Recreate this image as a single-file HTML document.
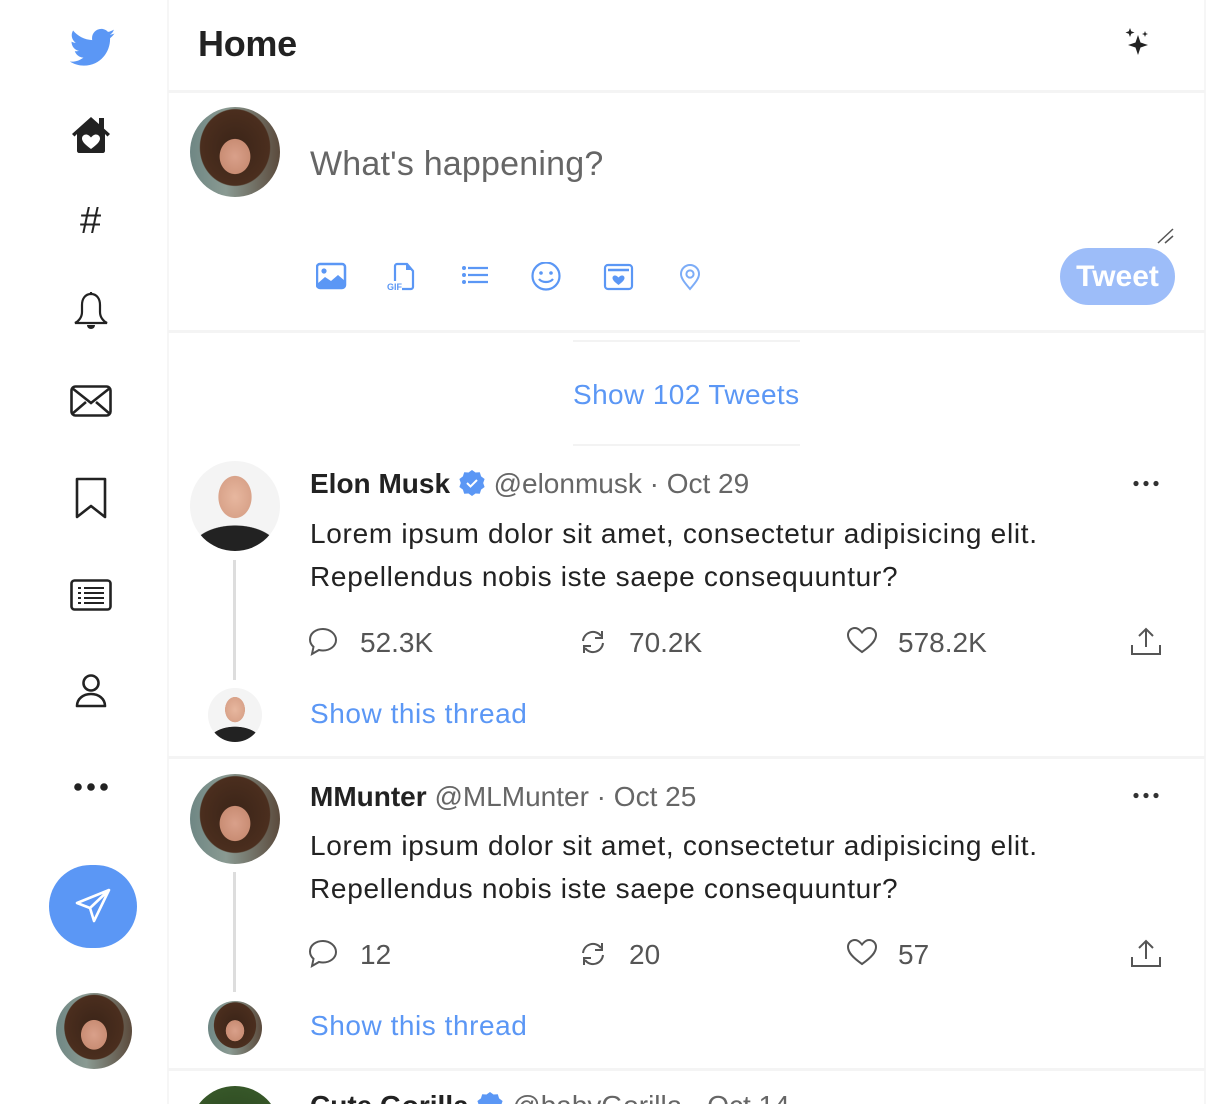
<!DOCTYPE html>
<html style="width:1220px;height:1104px;overflow:hidden"><head><meta charset="utf-8"><style>
*{margin:0;padding:0;box-sizing:border-box}
body{width:1220px;height:1104px;overflow:hidden;background:#fff;font-family:"Liberation Sans",Arial,sans-serif;color:#222;position:relative}
.a{position:absolute}
.sep{position:absolute;left:168px;width:1037px;height:3px;background:#f4f4f4}
.av{position:absolute;border-radius:50%;overflow:hidden}
.woman{background:radial-gradient(ellipse 28% 32% at 50% 55%,#d9a08a 0,#c98d74 60%,transparent 62%),radial-gradient(ellipse 55% 60% at 50% 45%,#3a2418 0,#4b2e1e 70%,transparent 72%),linear-gradient(90deg,#6f8784,#8a9a92 40%,#5b4a3c);}
.elon{background:radial-gradient(ellipse 26% 33% at 50% 40%,#e7b79f 0,#d9a38a 70%,transparent 72%),radial-gradient(ellipse 60% 35% at 50% 100%,#222 0,#222 80%,transparent 82%),#f4f4f4;}
.txt{font-size:28px;line-height:43px;color:#222;letter-spacing:0.7px;white-space:nowrap}
.nm{font-size:28px;font-weight:bold;color:#222}
.mut{color:#666}
.st{font-size:28px;color:#555}
.blue{color:#5b97f5}
</style></head><body>
<div class="a" style="left:167px;top:0;width:2px;height:1104px;background:#f6f6f6"></div>
<div class="a" style="left:1204px;top:0;width:2px;height:1104px;background:#f6f6f6"></div>
<svg class="a" style="left:70px;top:28px" width="46" height="40" viewBox="0 0 24 20"><path fill="#5b97f5" d="M23.6 2.3c-.9.4-1.8.6-2.8.8 1-.6 1.8-1.6 2.1-2.7-.9.6-2 1-3.1 1.2C19 .6 17.7 0 16.3 0c-2.7 0-4.8 2.2-4.8 4.8 0 .4 0 .8.1 1.1C7.5 5.7 4 3.8 1.6.9c-.4.7-.7 1.6-.7 2.4 0 1.7.9 3.2 2.1 4-.8 0-1.5-.2-2.2-.6v.1c0 2.3 1.7 4.3 3.9 4.7-.4.1-.8.2-1.3.2-.3 0-.6 0-.9-.1.6 1.9 2.4 3.3 4.5 3.4-1.7 1.3-3.7 2.1-6 2.1-.4 0-.8 0-1.2-.1 2.1 1.4 4.7 2.2 7.4 2.2 8.9 0 13.7-7.4 13.7-13.7v-.6c.9-.7 1.7-1.5 2.3-2.5z"/></svg>
<svg class="a" style="left:71px;top:115px" width="40" height="38" viewBox="0 0 40 38"><path fill="#222" d="M20 2L1 19l2.5 2.5L6 19v17c0 1 1 2 2 2h24c1 0 2-1 2-2V19l2.5 2.5L39 19l-6-5.4V3h-5v6.1z"/><path fill="#fff" d="M20 34c-6-4.5-9-7.5-9-10.5 0-2.5 2-4 4-4 2 0 3.5 1.3 5 3 1.5-1.7 3-3 5-3s4 1.5 4 4c0 3-3 6-9 10.5z"/></svg>
<div class="a" style="left:80px;top:200px;font-size:38px;color:#222">#</div>
<svg class="a" style="left:72px;top:290px" width="38" height="42" viewBox="0 0 38 42"><path fill="none" stroke="#222" stroke-width="2.2" d="M19 2v2M19 4c-6 0-9 5-9 11v7c0 5-3 9-7 11h32c-4-2-7-6-7-11v-7c0-6-3-11-9-11z"/><path fill="#222" d="M15 35h8c0 2.5-2 4-4 4s-4-1.5-4-4z"/></svg>
<svg class="a" style="left:70px;top:385px" width="42" height="32" viewBox="0 0 42 32"><rect x="1.5" y="1.5" width="39" height="29" rx="4" fill="none" stroke="#222" stroke-width="2.6"/><path d="M2 3l19 15L40 3M2 29l14-12M40 29L26 17" fill="none" stroke="#222" stroke-width="2.6"/></svg>
<svg class="a" style="left:74px;top:476px" width="34" height="44" viewBox="0 0 34 44"><path d="M3 3h28v38L17 30 3 41z" fill="none" stroke="#222" stroke-width="2.6" stroke-linejoin="round"/></svg>
<svg class="a" style="left:70px;top:579px" width="42" height="32" viewBox="0 0 42 32"><rect x="1.5" y="1.5" width="39" height="29" rx="3" fill="none" stroke="#222" stroke-width="2.6"/><path d="M8 9h3M14 9h20M8 14h3M14 14h20M8 19h3M14 19h20M8 24h3M14 24h20" stroke="#222" stroke-width="2"/></svg>
<svg class="a" style="left:74px;top:673px" width="34" height="36" viewBox="0 0 34 36"><circle cx="17" cy="10" r="7.5" fill="none" stroke="#222" stroke-width="2.6"/><path d="M3 33c0-7 6-12 14-12s14 5 14 12z" fill="none" stroke="#222" stroke-width="2.6" stroke-linejoin="round"/></svg>
<svg class="a" style="left:73px;top:781px" width="36" height="12"><circle cx="5" cy="6" r="3.8" fill="#222"/><circle cx="18" cy="6" r="3.8" fill="#222"/><circle cx="31" cy="6" r="3.8" fill="#222"/></svg>
<div class="a" style="left:49px;top:865px;width:88px;height:83px;border-radius:42px;background:#5b97f5"></div>
<svg class="a" style="left:75px;top:888px" width="36" height="36" viewBox="0 0 36 36"><path d="M34 2L2 15l13 5 4 13zM15 20L34 2" fill="none" stroke="#fff" stroke-width="2.6" stroke-linejoin="round"/></svg>
<div class="av woman" style="left:56px;top:993px;width:76px;height:76px"></div>

<div class="a" style="left:198px;top:23px;font-size:36px;font-weight:bold;color:#222;letter-spacing:-0.3px">Home</div>
<svg class="a" style="left:1124px;top:27px" width="28" height="32" viewBox="0 0 28 32"><path fill="#222" d="M14 8l2.5 7.5L24 18l-7.5 2.5L14 28l-2.5-7.5L4 18l7.5-2.5z"/><path fill="#222" d="M6 1l1.2 3.3L10.5 5.5 7.2 6.7 6 10 4.8 6.7 1.5 5.5 4.8 4.3zM21 4l.8 2.2 2.2.8-2.2.8L21 10l-.8-2.2L18 7l2.2-.8z"/></svg>
<div class="sep" style="top:90px"></div>

<div class="av woman" style="left:190px;top:107px;width:90px;height:90px"></div>
<div class="a" style="left:310px;top:145px;font-size:34px;color:#666;letter-spacing:0.2px">What's happening?</div>
<svg class="a" style="left:1157px;top:228px" width="18" height="16"><path d="M1 15L16 1M8 15l8-7" stroke="#555" stroke-width="1.5"/></svg>
<svg class="a" style="left:316px;top:262px" width="400" height="30" viewBox="0 0 400 30">
<g fill="#5b97f5" stroke="#5b97f5">
<rect x="1" y="2" width="28" height="24" rx="3" fill="none" stroke-width="2.5"/><circle cx="8" cy="9" r="2.6" stroke="none"/><path d="M1 22l8-7 6 4 7-6 7 6v7H1z" stroke="none"/>
<path d="M86 27h9c1 0 2-1 2-2V9l-6-7h-10c-1 0-2 1-2 2v15" fill="none" stroke-width="2.2"/><path d="M90 2v6h6" stroke="none"/>
<text x="71" y="28" font-size="9" font-family="Liberation Sans" font-weight="bold" stroke="none">GIF</text>
<path d="M152 6h20M152 13h20M152 20h20" fill="none" stroke-width="2.2"/><circle cx="148" cy="6" r="2" stroke="none"/><circle cx="148" cy="13" r="2" stroke="none"/><circle cx="148" cy="20" r="2" stroke="none"/>
<circle cx="230" cy="14" r="13.5" fill="none" stroke-width="2.2"/><circle cx="225" cy="11" r="1.8" stroke="none"/><circle cx="235" cy="11" r="1.8" stroke="none"/><path d="M223 17c3 4 11 4 14 0" fill="none" stroke-width="2.2"/>
<rect x="289" y="3" width="27" height="24" rx="3" fill="none" stroke-width="2.2"/><path d="M292 8h21" stroke-width="2.6"/><path d="M302.5 23c-4-3-6-5-6-7 0-1.5 1-2.5 2.5-2.5 1.4 0 2.5 1 3.5 2 1-1 2-2 3.5-2s2.5 1 2.5 2.5c0 2-2 4-6 7z" stroke="none"/>
<path d="M374 27c-6-7-9-11-9-15a9 9 0 0 1 18 0c0 4-3 8-9 15z" fill="none" stroke-width="2" opacity=".8"/><circle cx="374" cy="12" r="3.6" fill="none" stroke-width="2" opacity=".8"/>
</g></svg>
<div class="a" style="left:1060px;top:248px;width:115px;height:57px;border-radius:29px;background:#9dbdf9;color:#fff;font-size:30px;font-weight:bold;text-align:center;line-height:57px">Tweet</div>
<div class="sep" style="top:330px"></div>

<div class="a" style="left:573px;top:340px;width:227px;height:2px;background:#f3f3f3"></div>
<div class="a blue" style="left:573px;top:379px;font-size:28px;letter-spacing:0.4px;white-space:nowrap">Show 102 Tweets</div>
<div class="a" style="left:573px;top:444px;width:227px;height:2px;background:#f3f3f3"></div>

<div class="av elon" style="left:190px;top:461px;width:90px;height:90px"></div>
<div class="a" style="left:233px;top:560px;width:3px;height:120px;background:#ddd"></div>
<div class="a" style="left:310px;top:468px;font-size:28px;white-space:nowrap"><span class="nm">Elon Musk</span> <svg width="28" height="28" viewBox="0 0 28 28" style="vertical-align:-4px"><path fill="#5b97f5" d="M14 1l3.5 2.5 4.3-.2 1.3 4.1 3.5 2.6-1.4 4 1.4 4-3.5 2.6-1.3 4.1-4.3-.2L14 27l-3.5-2.5-4.3.2-1.3-4.1L1.4 18l1.4-4-1.4-4 3.5-2.6 1.3-4.1 4.3.2z"/><path d="M9 14l3.5 3.5L19 11" fill="none" stroke="#fff" stroke-width="2"/></svg> <span class="mut">@elonmusk · Oct 29</span></div>
<svg class="a" style="left:1133px;top:480px" width="26" height="7"><circle cx="3" cy="3.5" r="2.6" fill="#333"/><circle cx="13" cy="3.5" r="2.6" fill="#333"/><circle cx="23" cy="3.5" r="2.6" fill="#333"/></svg>
<div class="a txt" style="left:310px;top:512px">Lorem ipsum dolor sit amet, consectetur adipisicing elit.<br>Repellendus nobis iste saepe consequuntur?</div>
<svg class="a" style="left:308px;top:627px" width="32" height="30" viewBox="0 0 32 30"><path d="M15 2C8 2 2 6 2 12.5c0 3 1.4 5.5 3.5 7.3L4 27l7-4c1.2.3 2.6.5 4 .5 7 0 13-4.5 13-10.5S22 2 15 2z" fill="none" stroke="#555" stroke-width="2"/></svg>
<div class="a st" style="left:360px;top:627px">52.3K</div>
<svg class="a" style="left:578px;top:629px" width="30" height="26" viewBox="0 0 30 26"><path d="M5 12a10 10 0 0 1 18-5M25 14a10 10 0 0 1-18 5" fill="none" stroke="#555" stroke-width="2"/><path d="M24 2v7h-7M6 24v-7h7" fill="none" stroke="#555" stroke-width="2"/></svg>
<div class="a st" style="left:629px;top:627px">70.2K</div>
<svg class="a" style="left:846px;top:626px" width="32" height="28" viewBox="0 0 32 28"><path d="M16 26C6 19 2 14 2 9c0-4 3-7 7-7 3 0 5 2 7 4.5C18 4 20 2 23 2c4 0 7 3 7 7 0 5-4 10-14 17z" fill="none" stroke="#555" stroke-width="2"/></svg>
<div class="a st" style="left:898px;top:627px">578.2K</div>
<svg class="a" style="left:1130px;top:627px" width="32" height="30" viewBox="0 0 32 30"><path d="M16 20V3M9 9l7-7 7 7M2 18v9h28v-9" fill="none" stroke="#555" stroke-width="2"/></svg>
<div class="av elon" style="left:208px;top:688px;width:54px;height:54px"></div>
<div class="a blue" style="left:310px;top:698px;font-size:28px;letter-spacing:0.55px;white-space:nowrap">Show this thread</div>
<div class="sep" style="top:756px"></div>

<div class="av woman" style="left:190px;top:774px;width:90px;height:90px"></div>
<div class="a" style="left:233px;top:872px;width:3px;height:120px;background:#ddd"></div>
<div class="a" style="left:310px;top:781px;font-size:28px;white-space:nowrap"><span class="nm">MMunter</span> <span class="mut">@MLMunter · Oct 25</span></div>
<svg class="a" style="left:1133px;top:792px" width="26" height="7"><circle cx="3" cy="3.5" r="2.6" fill="#333"/><circle cx="13" cy="3.5" r="2.6" fill="#333"/><circle cx="23" cy="3.5" r="2.6" fill="#333"/></svg>
<div class="a txt" style="left:310px;top:824px">Lorem ipsum dolor sit amet, consectetur adipisicing elit.<br>Repellendus nobis iste saepe consequuntur?</div>
<svg class="a" style="left:308px;top:939px" width="32" height="30" viewBox="0 0 32 30"><path d="M15 2C8 2 2 6 2 12.5c0 3 1.4 5.5 3.5 7.3L4 27l7-4c1.2.3 2.6.5 4 .5 7 0 13-4.5 13-10.5S22 2 15 2z" fill="none" stroke="#555" stroke-width="2"/></svg>
<div class="a st" style="left:360px;top:939px">12</div>
<svg class="a" style="left:578px;top:941px" width="30" height="26" viewBox="0 0 30 26"><path d="M5 12a10 10 0 0 1 18-5M25 14a10 10 0 0 1-18 5" fill="none" stroke="#555" stroke-width="2"/><path d="M24 2v7h-7M6 24v-7h7" fill="none" stroke="#555" stroke-width="2"/></svg>
<div class="a st" style="left:629px;top:939px">20</div>
<svg class="a" style="left:846px;top:938px" width="32" height="28" viewBox="0 0 32 28"><path d="M16 26C6 19 2 14 2 9c0-4 3-7 7-7 3 0 5 2 7 4.5C18 4 20 2 23 2c4 0 7 3 7 7 0 5-4 10-14 17z" fill="none" stroke="#555" stroke-width="2"/></svg>
<div class="a st" style="left:898px;top:939px">57</div>
<svg class="a" style="left:1130px;top:939px" width="32" height="30" viewBox="0 0 32 30"><path d="M16 20V3M9 9l7-7 7 7M2 18v9h28v-9" fill="none" stroke="#555" stroke-width="2"/></svg>
<div class="av woman" style="left:208px;top:1001px;width:54px;height:54px"></div>
<div class="a blue" style="left:310px;top:1010px;font-size:28px;letter-spacing:0.55px;white-space:nowrap">Show this thread</div>
<div class="sep" style="top:1068px"></div>

<div class="a" style="left:170px;top:1071px;width:1030px;height:33px;overflow:hidden">
<div class="av" style="left:20px;top:15px;width:90px;height:90px;background:radial-gradient(circle at 50% 60%,#888 0,#666 30%,#2d4a22 32%,#3c5e2c)"></div>
<div class="a" style="left:140px;top:19px;font-size:28px;white-space:nowrap"><span class="nm">Cute Gorilla</span> <svg width="28" height="28" viewBox="0 0 28 28" style="vertical-align:-4px"><path fill="#5b97f5" d="M14 1l3.5 2.5 4.3-.2 1.3 4.1 3.5 2.6-1.4 4 1.4 4-3.5 2.6-1.3 4.1-4.3-.2L14 27l-3.5-2.5-4.3.2-1.3-4.1L1.4 18l1.4-4-1.4-4 3.5-2.6 1.3-4.1 4.3.2z"/></svg> <span class="mut">@babyGorilla · Oct 14</span></div>
</div>
</body></html>
